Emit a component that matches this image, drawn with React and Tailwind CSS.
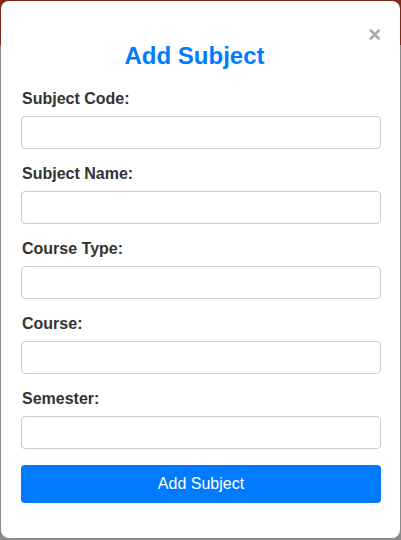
import React from "react";

const fields = ["Subject Code:", "Subject Name:", "Course Type:", "Course:", "Semester:"];

export default function App() {
  return (
    <div
      className="h-[540px] w-[401px] overflow-hidden bg-[linear-gradient(to_bottom,#7a2c17_0px,#7a2c17_45px,#8a8a8a_45px)] p-[1px] pb-[2px]"
      style={{ fontFamily: '"Liberation Sans", Arial, sans-serif' }}
    >
      <div className="relative h-[537px] w-[399px] rounded-[8px] bg-white pl-[20px] pr-[19px] pt-[41px]">
        <span className="absolute right-[19px] top-[22px] text-[22px] font-bold leading-[24px] text-[#aaaaaa]">
          ×
        </span>
        <h2 className="mr-[13px] text-center text-[24px] font-bold leading-[28px] text-[#007bff]">
          Add Subject
        </h2>
        <form className="mt-[20px] flex flex-col gap-[16px]">
          {fields.map((f) => (
            <div key={f} className="flex flex-col gap-[8px]">
              <label className="pl-[1px] text-[16px] font-bold leading-[18px] text-[#333333]">
                {f}
              </label>
              <input
                type="text"
                className="h-[33px] w-full rounded-[4px] border border-[#cccccc] bg-white px-2 outline-none"
              />
            </div>
          ))}
          <button
            type="button"
            className="h-[38px] w-full rounded-[4px] bg-[#007bff] text-[16px] leading-[18px] text-white"
          >
            Add Subject
          </button>
        </form>
      </div>
    </div>
  );
}
